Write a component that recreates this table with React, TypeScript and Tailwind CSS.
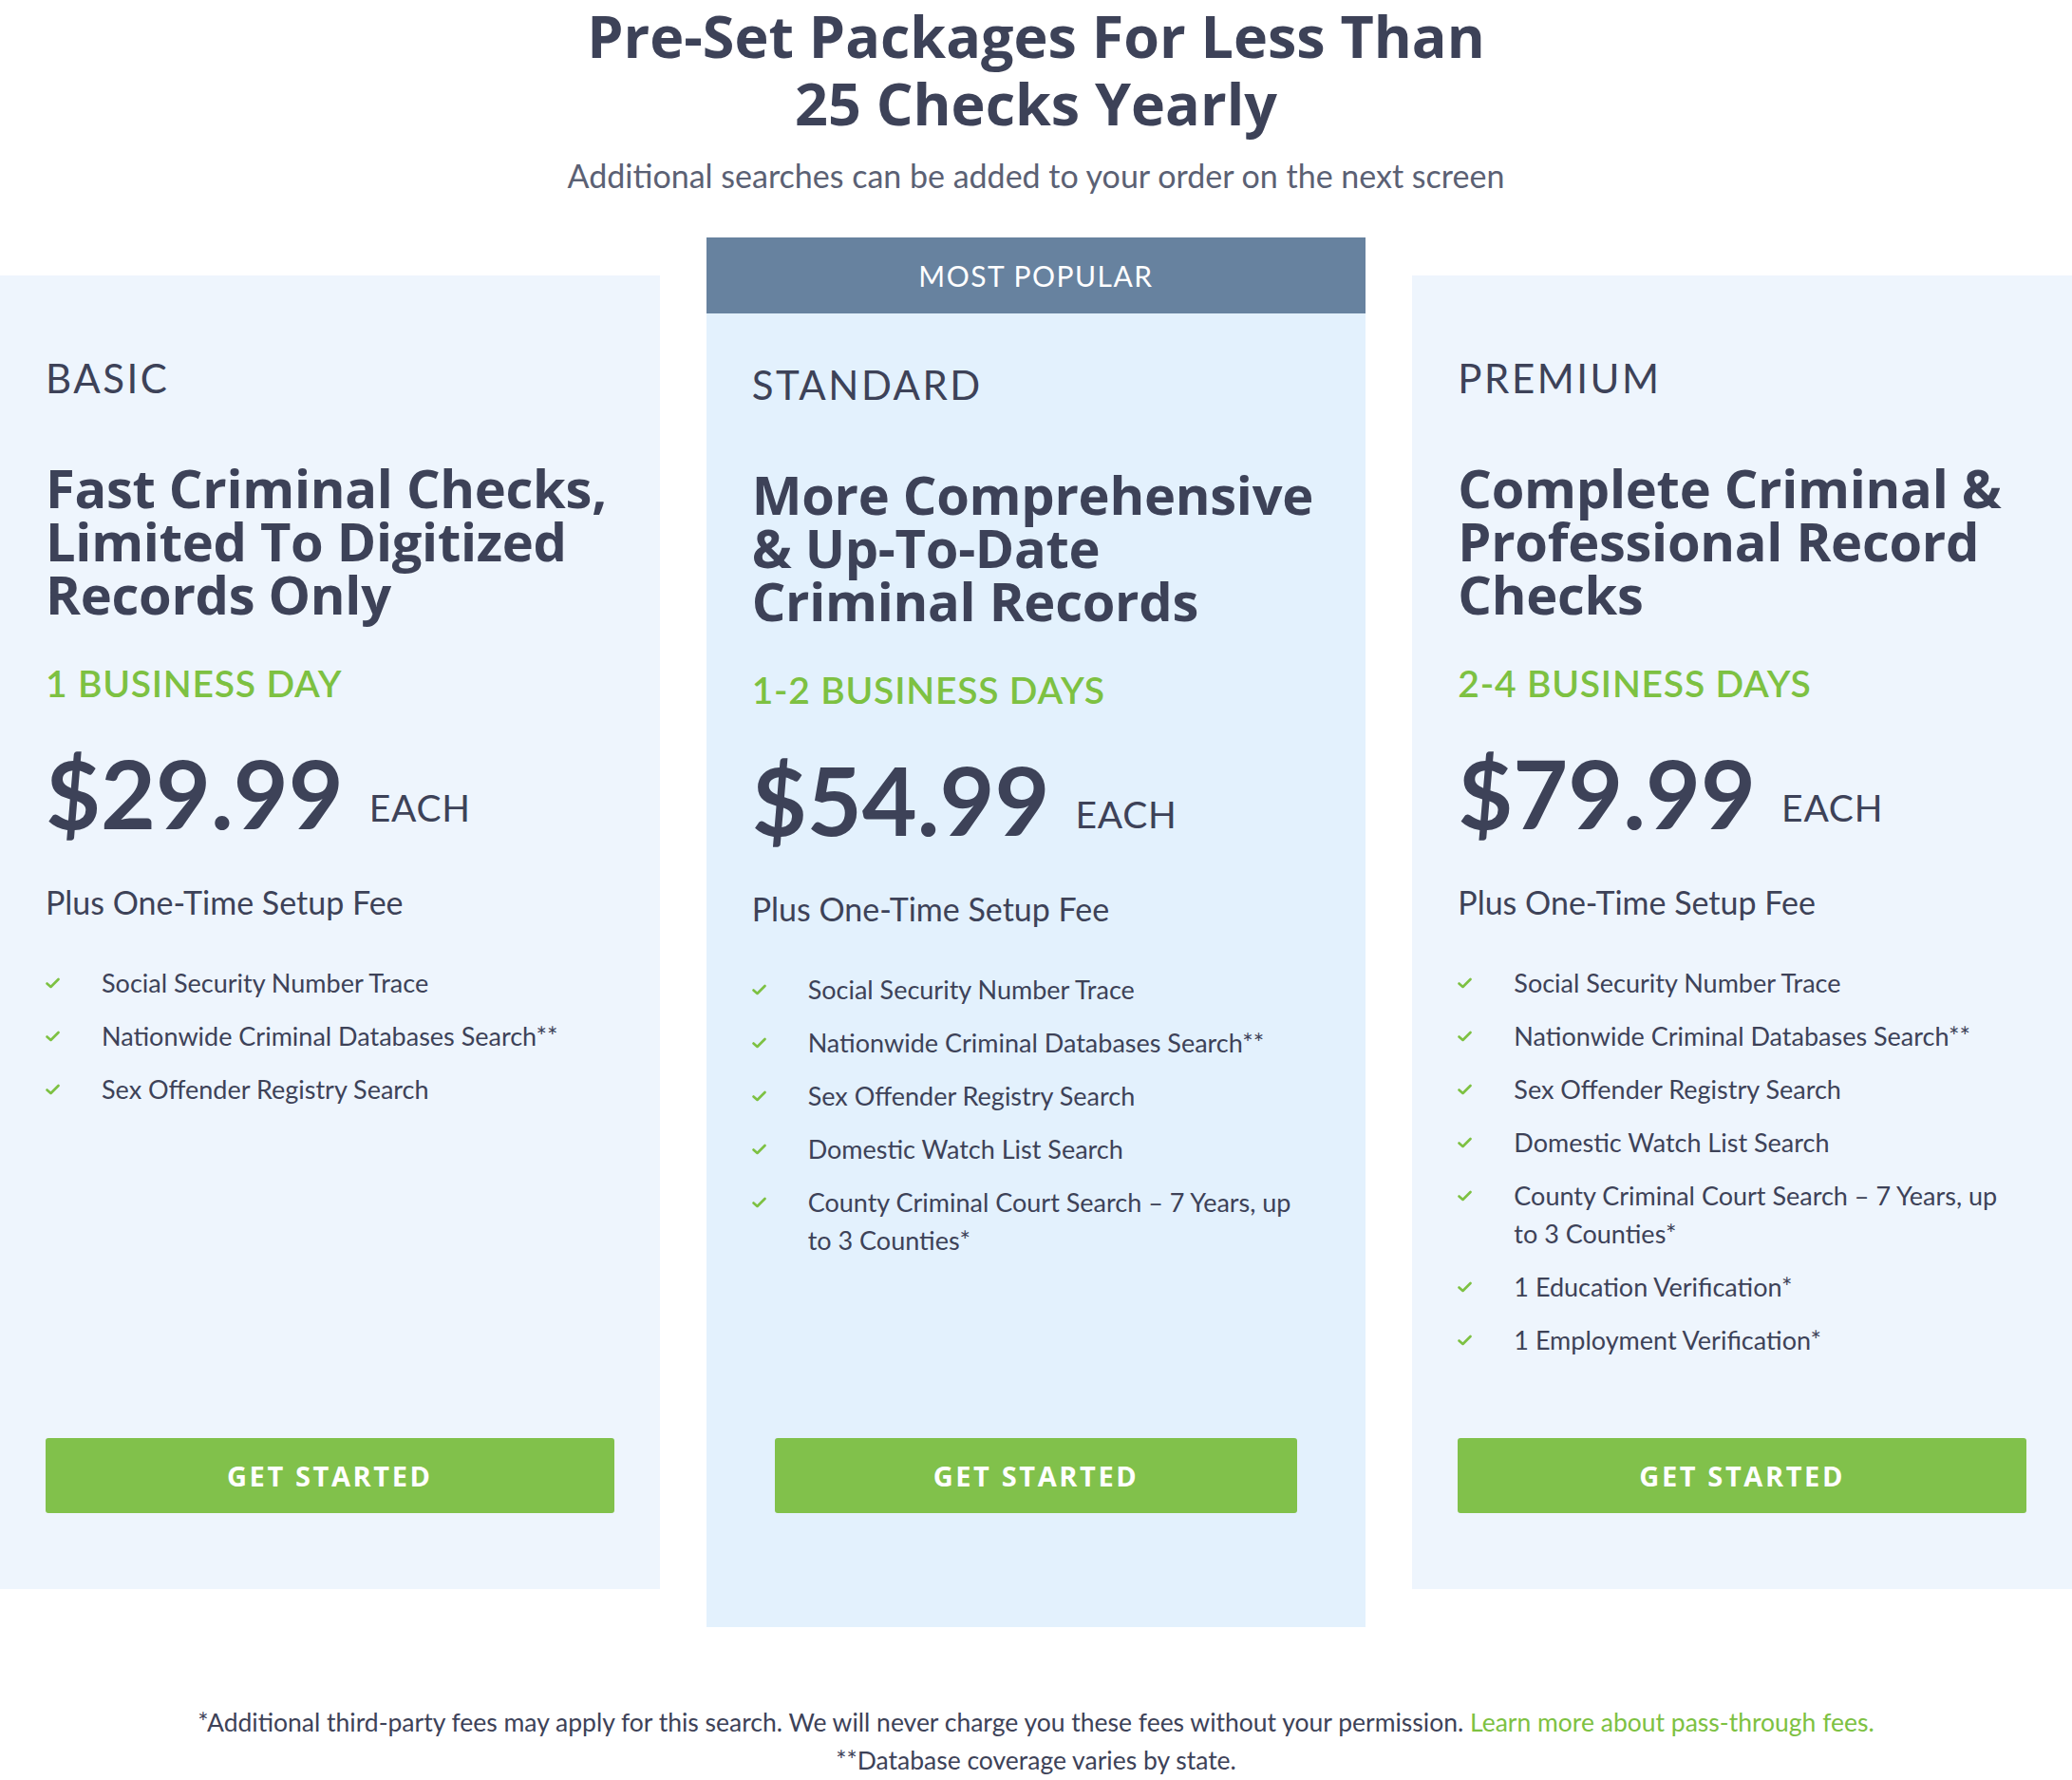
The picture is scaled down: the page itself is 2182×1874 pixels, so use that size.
import React from "react";

const head = "font-['Lato','Liberation_Sans',sans-serif]";
const bold = "font-['Open_Sans','Liberation_Sans',sans-serif]";
const body = "font-['Lato','Liberation_Sans',sans-serif]";

type Plan = {
  name: string;
  title: string[];
  days: string;
  price: string;
  features: string[][];
  popular?: boolean;
};

const plans: Plan[] = [
  {
    name: "BASIC",
    title: ["Fast Criminal Checks,", "Limited To Digitized", "Records Only"],
    days: "1 BUSINESS DAY",
    price: "$29.99",
    features: [
      ["Social Security Number Trace"],
      ["Nationwide Criminal Databases Search**"],
      ["Sex Offender Registry Search"],
    ],
  },
  {
    name: "STANDARD",
    title: ["More Comprehensive", "& Up-To-Date", "Criminal Records"],
    days: "1-2 BUSINESS DAYS",
    price: "$54.99",
    popular: true,
    features: [
      ["Social Security Number Trace"],
      ["Nationwide Criminal Databases Search**"],
      ["Sex Offender Registry Search"],
      ["Domestic Watch List Search"],
      ["County Criminal Court Search – 7 Years, up", "to 3 Counties*"],
    ],
  },
  {
    name: "PREMIUM",
    title: ["Complete Criminal &", "Professional Record", "Checks"],
    days: "2-4 BUSINESS DAYS",
    price: "$79.99",
    features: [
      ["Social Security Number Trace"],
      ["Nationwide Criminal Databases Search**"],
      ["Sex Offender Registry Search"],
      ["Domestic Watch List Search"],
      ["County Criminal Court Search – 7 Years, up", "to 3 Counties*"],
      ["1 Education Verification*"],
      ["1 Employment Verification*"],
    ],
  },
];

function Check() {
  return (
    <svg width="15" height="12" viewBox="0 0 15 12" className="shrink-0">
      <path d="M1.5 6.5 L5.5 10 L13.5 2" fill="none" stroke="#7dc142" strokeWidth="2.6" strokeLinecap="round" strokeLinejoin="round" />
    </svg>
  );
}

function Card({ plan }: { plan: Plan }) {
  return (
    <div className={plan.popular ? "flex flex-col min-h-[1463px] bg-[#e3f1fd]" : "flex flex-col my-[40px] bg-[#eef5fd]"}>
      {plan.popular && (
        <div className={`h-[80px] flex items-center justify-center bg-[#67829f] text-white text-[30px] tracking-[0.05em] ${head}`}>
          MOST POPULAR
        </div>
      )}
      <div className={`flex flex-col flex-1 px-[48px] ${plan.popular ? "pt-[50px] pb-[120px]" : "pt-[83px] pb-[80px]"}`}>
        <div className={`text-[42px] leading-[50px] tracking-[0.06em] text-[#3d4258] ${head}`}>{plan.name}</div>
        <h2 className={`mt-[62px] text-[56px] leading-[56px] font-bold tracking-[-0.005em] text-[#3d4258] ${bold}`}>
          {plan.title.map((t) => (
            <div key={t}>{t}</div>
          ))}
        </h2>
        <div className={`mt-[42px] text-[39px] leading-[48px] font-semibold tracking-[0.02em] text-[#7dc142] ${head}`}>{plan.days}</div>
        <div className={`mt-[41px] flex items-baseline text-[#3d4258] ${head}`}>
          <span className="text-[100px] leading-[100px] font-bold">{plan.price}</span>
          <span className="relative -top-[8px] ml-[27px] text-[39px] tracking-[0.02em]">EACH</span>
        </div>
        <div className={`mt-[40px] text-[34px] leading-[44px] text-[#3d4258] ${body}`}>Plus One-Time Setup Fee</div>
        <ul className="mt-[43px] flex flex-col gap-[16px]">
          {plan.features.map((f) => (
            <li key={f[0]} className="flex">
              <div className="w-[59px] h-[40px] flex items-center">
                <Check />
              </div>
              <div className={`text-[27px] leading-[40px] text-[#3d4258] ${body}`}>
                {f.map((l) => (
                  <div key={l}>{l}</div>
                ))}
              </div>
            </li>
          ))}
        </ul>
        <div className={`mt-auto pt-[40px] ${plan.popular ? "px-[24px]" : ""}`}>
          <button className={`w-full h-[79px] rounded-[3px] bg-[#81c14b] text-white text-[29px] font-bold tracking-[0.09em] ${bold}`}>
            GET STARTED
          </button>
        </div>
      </div>
    </div>
  );
}

export default function App() {
  return (
    <div className="w-[2182px] min-h-[1874px] bg-white">
      <div className="pt-[2px] text-center">
        <h1 className={`text-[61px] leading-[71px] font-bold text-[#3d4258] ${bold}`}>
          Pre-Set Packages For Less Than
          <br />
          25 Checks Yearly
        </h1>
        <p className={`mt-[16px] text-[34px] leading-[50px] text-[#5b6174] ${body}`}>
          Additional searches can be added to your order on the next screen
        </p>
      </div>
      <div className="mt-[40px] grid grid-cols-3 gap-[49px] items-stretch">
        {plans.map((p) => (
          <Card key={p.name} plan={p} />
        ))}
      </div>
      <div className={`mt-[80px] text-center text-[26.5px] leading-[40px] text-[#3d4258] ${body}`}>
        <p>
          *Additional third-party fees may apply for this search. We will never charge you these fees without your permission.{" "}
          <a className="text-[#7dc142]">Learn more about pass-through fees.</a>
        </p>
        <p>**Database coverage varies by state.</p>
      </div>
    </div>
  );
}
